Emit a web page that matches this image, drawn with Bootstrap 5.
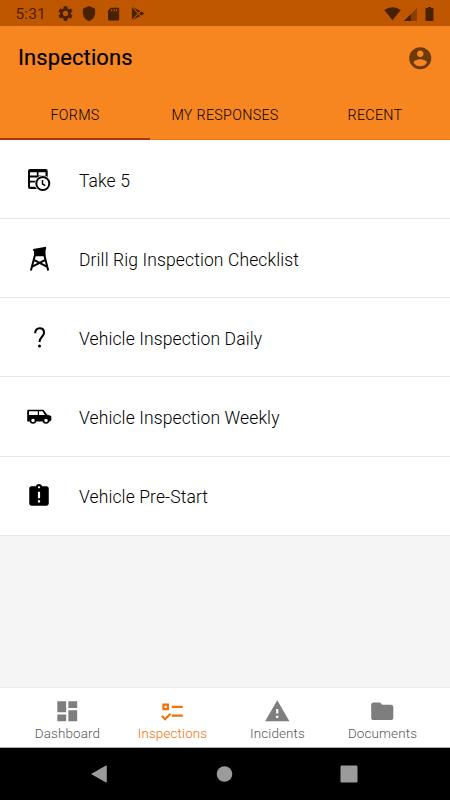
<!DOCTYPE html>
<html lang="en">
<head>
<meta charset="utf-8">
<meta name="viewport" content="width=device-width, initial-scale=1">
<title>Inspections</title>
<link href="https://cdn.jsdelivr.net/npm/bootstrap@5.3.0/dist/css/bootstrap.min.css" rel="stylesheet">
<style>
body{font-family:Roboto,"Liberation Sans",sans-serif;background:#f5f5f5;color:#000;overflow:hidden}
svg{display:block;flex:none;fill:currentColor}
.status-strip{height:26px;background:#bf5700;color:#4a2100;padding:1px 16px 0 15.5px}
.clock{font-size:15.5px;line-height:26px;width:42px;letter-spacing:.1px;color:#4a2100}
.app-head{height:64px;background:#f78621;padding:0 17px 0 18px}
.app-title{font-size:22px;font-weight:400;line-height:64px;letter-spacing:.1px;-webkit-text-stroke:.2px #000}
.tab-strip{height:50px;background:#f78621;border-bottom:1px solid #ee7612}
.tab-strip .nav-link{height:50px;padding:0;line-height:50px;font-size:14.3px;font-weight:300;color:#000;border-radius:0;letter-spacing:.3px}
.tab-strip .nav-link.active{border-bottom:2px solid #a93304;background:none;color:#000}
.form-list{background:#fff;border-radius:0}
.form-row{height:79.15px;padding:1px 26px 0;gap:27px;border:0;border-bottom:1px solid #e8e8e8;font-size:17.5px;font-weight:300;letter-spacing:.11px;color:#000;border-radius:0!important}
.form-row span{padding-top:2.6px}
.form-list .form-row:last-child{border-bottom:1px solid #e8e8e8}
.form-row svg{width:26px;height:26px}
.bottom-bar{height:61px;background:#fff;border-top:1px solid #ececec;border-bottom:1px solid #aaa;padding:0 15px}
.bottom-bar .nav-link{padding:10px 0 0;color:#585858;font-size:13.4px;font-weight:300;line-height:17px;letter-spacing:.15px}
.bottom-bar .nav-link.active{color:#f57000}
.bottom-bar svg{width:26.5px;height:26.5px;margin:0 auto}
.bottom-bar .nav-link:not(.active) svg{color:#7e7e7e}
.system-bar{height:52px;background:#000;color:#9b9b9b;padding:0 92px 0 90px}
</style>
<script src="https://cdn.jsdelivr.net/npm/bootstrap@5.3.0/dist/js/bootstrap.bundle.min.js"></script>
</head>
<body class="vh-100 d-flex flex-column">
<header>
  <div class="status-strip d-flex align-items-center">
    <span class="clock">5:31</span>
    <svg width="15" height="15" viewBox="2 2 20 20"><path d="M19.140 12.940c.04-.3.060-.610.060-.940 0-.320-.020-.640-.070-.940l2.030-1.580a.49.49 0 0 0 .120-.610l-1.920-3.320a.49.49 0 0 0-.590-.220l-2.390.960c-.5-.380-1.030-.7-1.620-.940l-.360-2.540a.48.48 0 0 0-.480-.410h-3.840c-.240 0-.430.170-.470.410l-.360 2.540c-.590.240-1.130.570-1.620.940l-2.390-.960a.48.48 0 0 0-.590.220L2.740 8.870c-.120.210-.080.470.120.610l2.030 1.580c-.05.3-.090.630-.090.940s.020.640.070.940l-2.030 1.580a.49.49 0 0 0-.120.610l1.920 3.320c.120.220.370.290.590.220l2.390-.960c.5.380 1.030.7 1.620.940l.360 2.540c.050.240.240.410.480.410h3.840c.240 0 .440-.170.470-.410l.360-2.540c.590-.240 1.130-.560 1.620-.940l2.390.960c.220.080.470 0 .590-.220l1.920-3.320a.47.47 0 0 0-.120-.610zM12 15.600A3.600 3.600 0 1 1 12 8.400a3.600 3.600 0 0 1 0 7.200z"/></svg>
    <svg class="ms-2" width="16" height="15" viewBox="1 1 22 22"><path d="M12 1 3 5v6c0 5.550 3.840 10.740 9 12 5.160-1.260 9-6.450 9-12V5z"/></svg>
    <svg class="ms-2" width="17" height="14" viewBox="0 0 17 14"><path d="M5.500 .7h7.500q1.200 0 1.200 1.200v10.400q0 1.200-1.200 1.200H4.200Q3 13.500 3 12.300V3.800zM6.200 2v2.500h1V2zm2.500 0v2.500h1V2zM11.200 2v2.500h1V2z" fill-rule="evenodd"/></svg>
    <svg class="ms-2" width="15" height="15" viewBox="-1 0 15 15"><path d="M.9 1.600v11.800l5.700-5.900zM1.700 1l5.700 5.700 1.900-1.800zM8.200 7.500l1.900 1.900L13.600 7.500l-3.500-1.900zM1.700 14l5.700-5.700 1.900 1.800z"/></svg>
    <svg class="ms-auto" width="17" height="14" viewBox="0 0 17 14"><path d="M.2 3Q8.500-2.600 16.800 3L8.500 13.200z"/></svg>
    <svg style="margin-left:3px" width="13" height="14" viewBox="0 0 13 14"><path d="M13 1v13H0z" fill="#8b3e00"/><path d="M7 7v7H0z"/></svg>
    <svg class="ms-2" width="9" height="14" viewBox="0 0 9 14"><path d="M3 0h3v1h1.800q.7 0 .7.7v11.600q0 .7-.7.7H1.200q-.7 0-.7-.7V1.700q0-.7.7-.7H3z"/></svg>
  </div>
  <div class="app-head d-flex align-items-center justify-content-between">
    <h1 class="app-title m-0">Inspections</h1>
    <svg width="26.500" height="26.500" viewBox="0 0 24 24"><path fill="#6e3a0c" d="M12 2C6.480 2 2 6.480 2 12s4.480 10 10 10 10-4.480 10-10S17.520 2 12 2zm0 3c1.660 0 3 1.340 3 3s-1.340 3-3 3-3-1.340-3-3 1.340-3 3-3zm0 14.200a7.200 7.200 0 0 1-6-3.220c.03-1.990 4-3.080 6-3.080 1.990 0 5.970 1.090 6 3.080a7.200 7.200 0 0 1-6 3.220z"/></svg>
  </div>
  <nav class="tab-strip nav nav-justified">
    <a class="nav-link active" href="#">FORMS</a>
    <a class="nav-link" href="#">MY RESPONSES</a>
    <a class="nav-link" href="#">RECENT</a>
  </nav>
</header>
<main class="flex-grow-1">
  <div class="list-group list-group-flush form-list">
    <a href="#" class="list-group-item form-row d-flex align-items-center">
      <svg viewBox="0 0 26 26"><path fill-rule="evenodd" d="M4 2h15.700q2 0 2 2v18H4q-2 0-2-2V4q0-2 2-2zM4 5.300v3.200h6.800V5.300zm8.500 0v3.200h7V5.300zM4 10.400v3.300h6.800v-3.300zm8.500 0v3.300h7v-3.300zM4 15.600v4.200h6.800v-4.200z"/><circle cx="16.800" cy="16.500" r="8.200" fill="#fff"/><circle cx="16.800" cy="16.500" r="6.500" fill="#fff" stroke="#000" stroke-width="2"/><path d="M16.500 13v4l2.800 1.600" fill="none" stroke="#000" stroke-width="1.500"/></svg>
      <span>Take 5</span></a>
    <a href="#" class="list-group-item form-row d-flex align-items-center">
      <svg viewBox="0 0 26 26"><path d="M7.200 3 20 .7v3h-.5v6.500H8V5h-.8z"/><path d="M9 9 4.900 24.500M18.300 9l3.900 15.500M8.300 14.200l12.500 6.500M18.900 14.200 6.300 20.700" fill="none" stroke="#000" stroke-width="2"/></svg>
      <span>Drill Rig Inspection Checklist</span></a>
    <a href="#" class="list-group-item form-row d-flex align-items-center">
      <svg viewBox="0 0 26 26"><path d="M9.200 8.200C9.200 5 11 3.300 13.600 3.300s4.400 1.600 4.400 4.400c0 3.800-4.500 4.500-4.500 9.300" fill="none" stroke="#000" stroke-width="2.100"/><circle cx="13.500" cy="21" r="1.500"/></svg>
      <span>Vehicle Inspection Daily</span></a>
    <a href="#" class="list-group-item form-row d-flex align-items-center">
      <svg viewBox="0 0 26 26"><path fill-rule="evenodd" d="M2.200 5.700h15.300l3.800 5 3.400 1q.6.200.6 1v4h-1.200v.8H1.200V6.700q0-1 1-1zM3 7.300V11h8.800V7.300zm10 0V11h6l-2.500-3.700z"/><g fill="#fff" stroke="#000" stroke-width="1.500"><circle cx="7" cy="16.500" r="2.500"/><circle cx="20" cy="16.500" r="2.500"/></g></svg>
      <span>Vehicle Inspection Weekly</span></a>
    <a href="#" class="list-group-item form-row d-flex align-items-center">
      <svg viewBox="0 0 24 24"><path d="M19 3h-4.180C14.400 1.840 13.300 1 12 1s-2.400.84-2.820 2H5c-1.100 0-2 .9-2 2v14c0 1.100.9 2 2 2h14c1.100 0 2-.9 2-2V5c0-1.100-.9-2-2-2zm-6 15h-2v-2h2zm0-4h-2V8h2zm-1-9c-.55 0-1-.45-1-1s.45-1 1-1 1 .45 1 1-.45 1-1 1z"/></svg>
      <span>Vehicle Pre-Start</span></a>
  </div>
</main>
<footer>
  <nav class="bottom-bar nav nav-justified">
    <a class="nav-link" href="#"><svg viewBox="0 0 24 24"><path d="M3 13h8V3H3zm0 8h8v-6H3zm10 0h8V11h-8zm0-18v6h8V3z"/></svg>Dashboard</a>
    <a class="nav-link active" href="#"><svg viewBox="0 0 24 24"><path fill-rule="evenodd" d="M3 5h6v6H3zm2 2v2h2V7zM11.500 7h10v2h-10zM11.500 15h10v2h-10zM3.200 15.300 5.500 17.900 9.800 13.600l1.300 1.300-5.600 5.800-3.600-4z"/></svg>Inspections</a>
    <a class="nav-link" href="#"><svg viewBox="0 0 24 24"><path d="M1 21h22L12 2zm12-3h-2v-2h2zm0-4h-2v-4h2z"/></svg>Incidents</a>
    <a class="nav-link" href="#"><svg viewBox="0 0 24 24"><path d="M10 4H4c-1.100 0-2 .9-2 2v12c0 1.100.9 2 2 2h16c1.100 0 2-.9 2-2V8c0-1.100-.9-2-2-2h-8z"/></svg>Documents</a>
  </nav>
  <div class="system-bar d-flex align-items-center justify-content-between">
    <svg width="18" height="18" viewBox="0 0 18 18"><path d="M1 9 16 .5q.8-.2.8.8v15.400q0 1-.8.8z"/></svg>
    <svg width="18" height="16" viewBox="0 0 18 16"><circle cx="9.500" cy="8" r="7.800"/></svg>
    <svg width="18" height="18" viewBox="0 0 18 18"><rect x=".5" y=".5" width="17" height="17" rx="1.200"/></svg>
  </div>
</footer>
</body>
</html>
